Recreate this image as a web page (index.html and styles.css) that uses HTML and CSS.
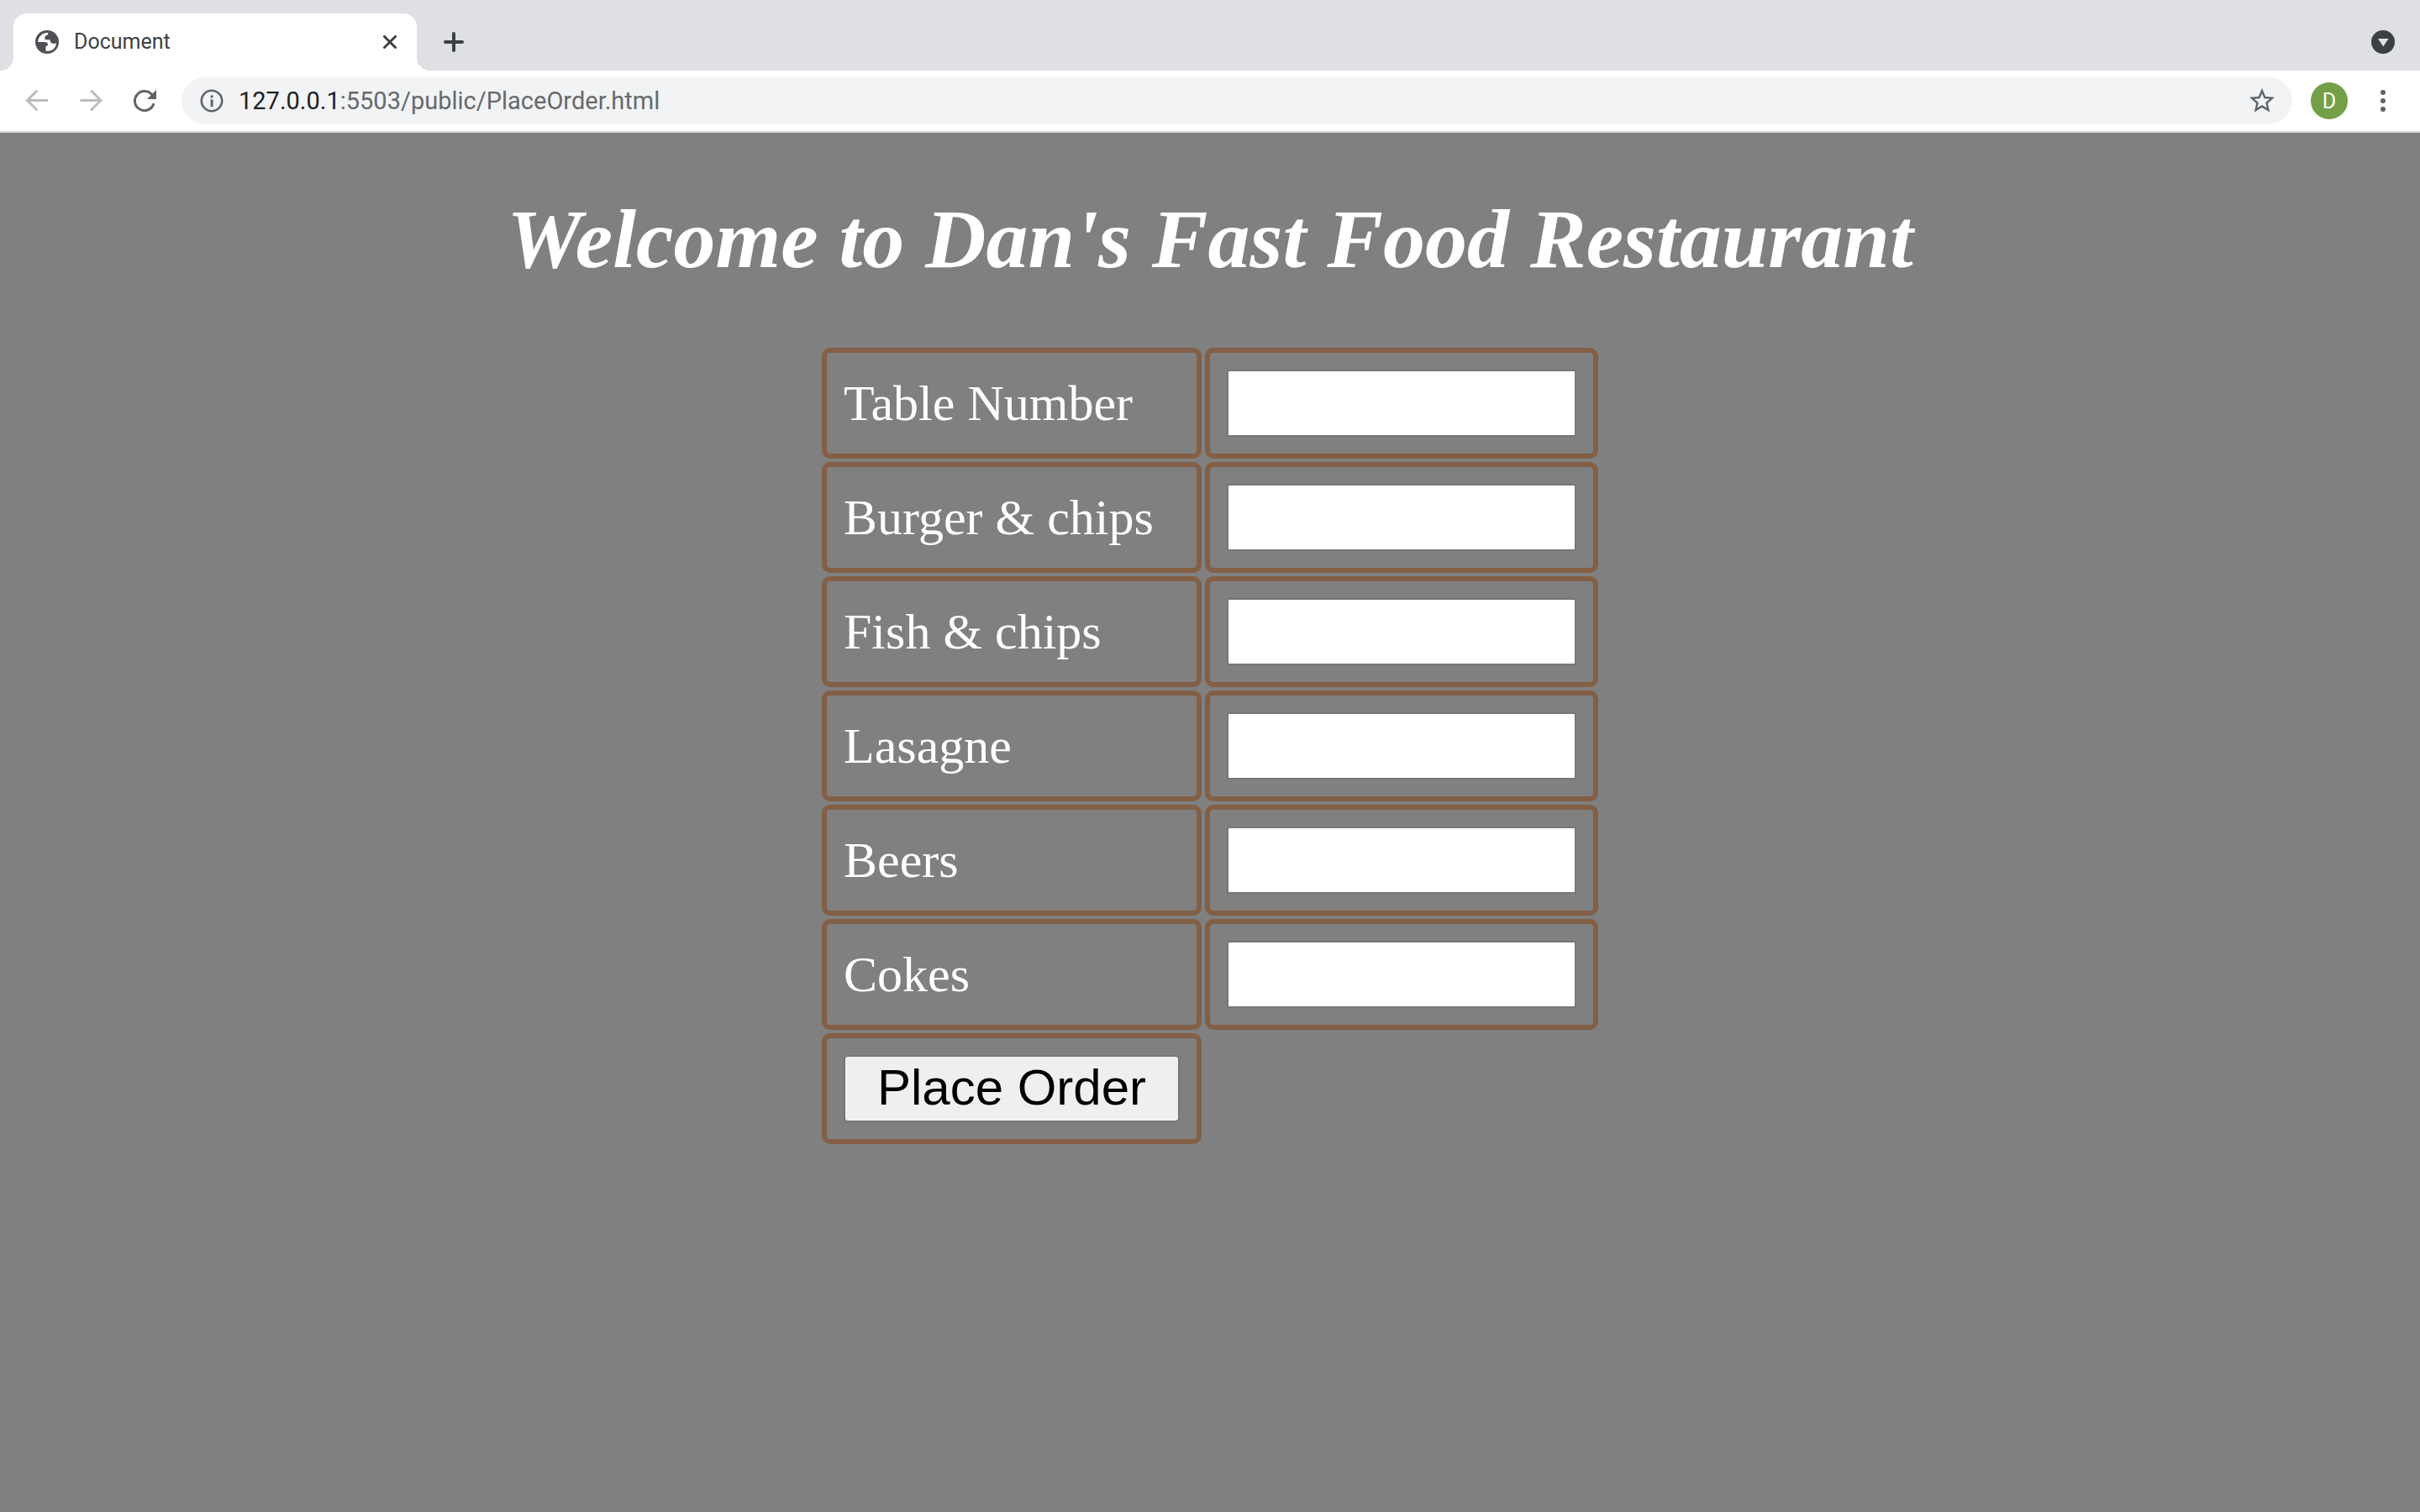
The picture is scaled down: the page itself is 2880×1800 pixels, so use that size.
FILE: index.html
```html
<!DOCTYPE html>
<html lang="en">
<head>
<meta charset="utf-8">
<title>Document</title>
<link rel="stylesheet" href="styles.css">
</head>
<body>
<header class="browser">
  <div class="tab-strip">
    <div class="tab">
      <svg class="favicon" viewBox="0 0 28 28" aria-hidden="true">
        <circle cx="14" cy="14" r="14" fill="#505156"/>
        <path fill="#fff" d="M15.500 3C9 2.500 3.300 7.500 3.200 14H10.500c3 0 4.500 1.200 4.500 3 0 1.200-.8 1.800-2.500 2v5.500C19.500 26 24.800 21 24.800 15.200c-1.300.8-2.800 1-4.300.6-2-.4-3-2-3-4.600h-6V8.500c0-1.800 1-2.700 3-2.700z"/>
      </svg>
      <span class="tab-title">Document</span>
      <button class="icon-button tab-close" type="button" aria-label="Close tab">
        <svg width="16" height="16" viewBox="0 0 16 16"><path d="M1.500 1.500l13 13M14.500 1.500l-13 13" stroke="#3c4043" stroke-width="3" stroke-linecap="round"/></svg>
      </button>
    </div>
    <button class="icon-button new-tab" type="button" aria-label="New tab">
      <svg width="24" height="24" viewBox="0 0 24 24"><path d="M12 2v20M2 12h20" stroke="#3c4043" stroke-width="4" stroke-linecap="round"/></svg>
    </button>
    <button class="icon-button" type="button" aria-label="Search tabs">
      <svg width="28" height="28" viewBox="0 0 28 28"><circle cx="14" cy="14" r="14" fill="#3c4043"/><path d="M8 10h12.500l-6.250 9.500z" fill="#dfe0e4"/></svg>
    </button>
  </div>
  <nav class="toolbar">
    <button class="icon-button" type="button" aria-label="Back">
      <svg width="28" height="28" viewBox="0 0 28 28" fill="none" stroke="#babcbe" stroke-width="3" stroke-linecap="round"><path d="M26 13.500H2.500M13.500 2.500l-11 11 11 11"/></svg>
    </button>
    <button class="icon-button" type="button" aria-label="Forward">
      <svg width="28" height="28" viewBox="0 0 28 28" fill="none" stroke="#babcbe" stroke-width="3" stroke-linecap="round"><path d="M2.500 13.500H26M15 2.500l11 11-11 11"/></svg>
    </button>
    <button class="icon-button" type="button" aria-label="Reload">
      <svg width="28" height="28" viewBox="0 0 28 28"><path d="M23 7A11.500 11.500 0 1 0 24.600 18.400" fill="none" stroke="#5f6368" stroke-width="3" stroke-linecap="round"/><path d="M28 1v11H17z" fill="#5f6368"/></svg>
    </button>
    <div class="address-bar">
      <svg width="28" height="28" viewBox="0 0 28 28" aria-hidden="true"><circle cx="14" cy="14" r="12.200" fill="none" stroke="#606367" stroke-width="2.600"/><path d="M12.600 7.500h3v3h-3zM12.600 12.500h3v8.500h-3z" fill="#606367"/></svg>
      <div class="address" role="textbox" aria-label="Address" contenteditable="true" spellcheck="false"><span class="address-host">127.0.0.1</span>:5503/public/PlaceOrder.html</div>
      <button class="icon-button" type="button" aria-label="Bookmark this page">
        <svg width="36" height="36" viewBox="0 0 24 24"><path fill="#5f6368" d="M22 9.240l-7.190-.62L12 2 9.190 8.630 2 9.240l5.460 4.730L5.820 21 12 17.270 18.180 21l-1.630-7.030L22 9.240zM12 15.400l-3.760 2.270 1-4.280-3.320-2.880 4.380-.38L12 6.100l1.710 4.040 4.380.38-3.320 2.880 1 4.280L12 15.400z"/></svg>
      </button>
    </div>
    <button class="avatar" type="button">D</button>
    <button class="icon-button" type="button" aria-label="Menu">
      <svg width="28" height="28" viewBox="0 0 28 28" fill="#5f6368"><circle cx="14" cy="4" r="3"/><circle cx="14" cy="14" r="3"/><circle cx="14" cy="24" r="3"/></svg>
    </button>
  </nav>
</header>
<main class="page">
  <h1 class="welcome">Welcome to Dan's Fast Food Restaurant</h1>
  <form>
    <table class="order">
      <tr><td class="cell"><label for="table-number">Table Number</label></td><td class="cell"><input class="amount" id="table-number" type="text"></td></tr>
      <tr><td class="cell"><label for="burger">Burger &amp; chips</label></td><td class="cell"><input class="amount" id="burger" type="text"></td></tr>
      <tr><td class="cell"><label for="fish">Fish &amp; chips</label></td><td class="cell"><input class="amount" id="fish" type="text"></td></tr>
      <tr><td class="cell"><label for="lasagne">Lasagne</label></td><td class="cell"><input class="amount" id="lasagne" type="text"></td></tr>
      <tr><td class="cell"><label for="beers">Beers</label></td><td class="cell"><input class="amount" id="beers" type="text"></td></tr>
      <tr><td class="cell"><label for="cokes">Cokes</label></td><td class="cell"><input class="amount" id="cokes" type="text"></td></tr>
      <tr><td class="cell"><button class="submit" type="submit">Place Order</button></td></tr>
    </table>
  </form>
</main>
</body>
</html>
```
FILE: styles.css
```css
* {
  box-sizing: border-box;
}

body {
  margin: 0;
  background: #808080;
  font-family: "Liberation Serif", "Times New Roman", serif;
}

svg {
  display: block;
  flex: none;
}

.browser {
  font-family: Roboto, sans-serif;
  background: #fff;
  border-bottom: 2px solid #d9dae0;
}

.tab-strip {
  display: flex;
  align-items: center;
  height: 84px;
  padding: 16px 12px 0 16px;
  background: #dfe0e4;
}

.tab {
  position: relative;
  display: flex;
  align-items: center;
  width: 480px;
  height: 68px;
  padding: 0 16px 0 26px;
  border-radius: 16px 16px 0 0;
  background: #fff;
}

.tab::before,
.tab::after {
  content: "";
  position: absolute;
  bottom: 0;
  width: 16px;
  height: 16px;
}

.tab::before {
  right: 100%;
  background: radial-gradient(circle at 0 0, transparent 16px, #fff 16px);
}

.tab::after {
  left: 100%;
  background: radial-gradient(circle at 100% 0, transparent 16px, #fff 16px);
}

.favicon {
  width: 28px;
  height: 28px;
}

.tab-title {
  flex: 1;
  margin-left: 18px;
  color: #3c4043;
  font-size: 25px;
  line-height: 28px;
}

.icon-button {
  display: flex;
  align-items: center;
  justify-content: center;
  width: 64px;
  height: 56px;
  padding: 0;
  border: 0;
  background: none;
}

.tab-close {
  width: 32px;
  height: 32px;
}

.new-tab {
  margin: 0 auto 0 12px;
}

.toolbar {
  display: flex;
  align-items: center;
  height: 72px;
  padding: 0 12px;
}

.address-bar {
  display: flex;
  flex: 1;
  align-items: center;
  height: 56px;
  margin: 0 22px 0 12px;
  padding: 0 4px 0 22px;
  border-radius: 28px;
  background: #f1f3f4;
}

.address {
  flex: 1;
  margin-left: 18px;
  color: #67696c;
  font-size: 29px;
  line-height: 32px;
}

.address-host {
  color: #202124;
}

.avatar {
  width: 44px;
  height: 44px;
  margin-right: 10px;
  padding: 0;
  border: 0;
  border-radius: 50%;
  background: #739f48;
  color: #fff;
  font-family: Roboto, sans-serif;
  font-size: 25px;
}

.page {
  padding: 69px 16px 0;
  color: #fff;
}

.welcome {
  margin: 0 0 68px;
  font-size: 100px;
  font-style: italic;
  line-height: 115px;
  text-align: center;
}

.order {
  margin: 0 auto;
  border-spacing: 4px;
  font-size: 60px;
}

.cell {
  padding: 20px;
  border: 6px solid #825f45;
  border-radius: 10px;
}

.cell label,
.amount,
.submit {
  display: block;
}

.amount {
  width: 416px;
  height: 80px;
  padding: 2px 4px;
  border: 2px solid #767676;
  border-radius: 3px;
  background: #fff;
  font: 60px "Liberation Sans", Arial, sans-serif;
}

.submit {
  width: 400px;
  height: 80px;
  padding: 0 0 4px;
  border: 2px solid #767676;
  border-radius: 5px;
  background: #efefef;
  color: #000;
  font: 60px "Liberation Sans", Arial, sans-serif;
}
```
